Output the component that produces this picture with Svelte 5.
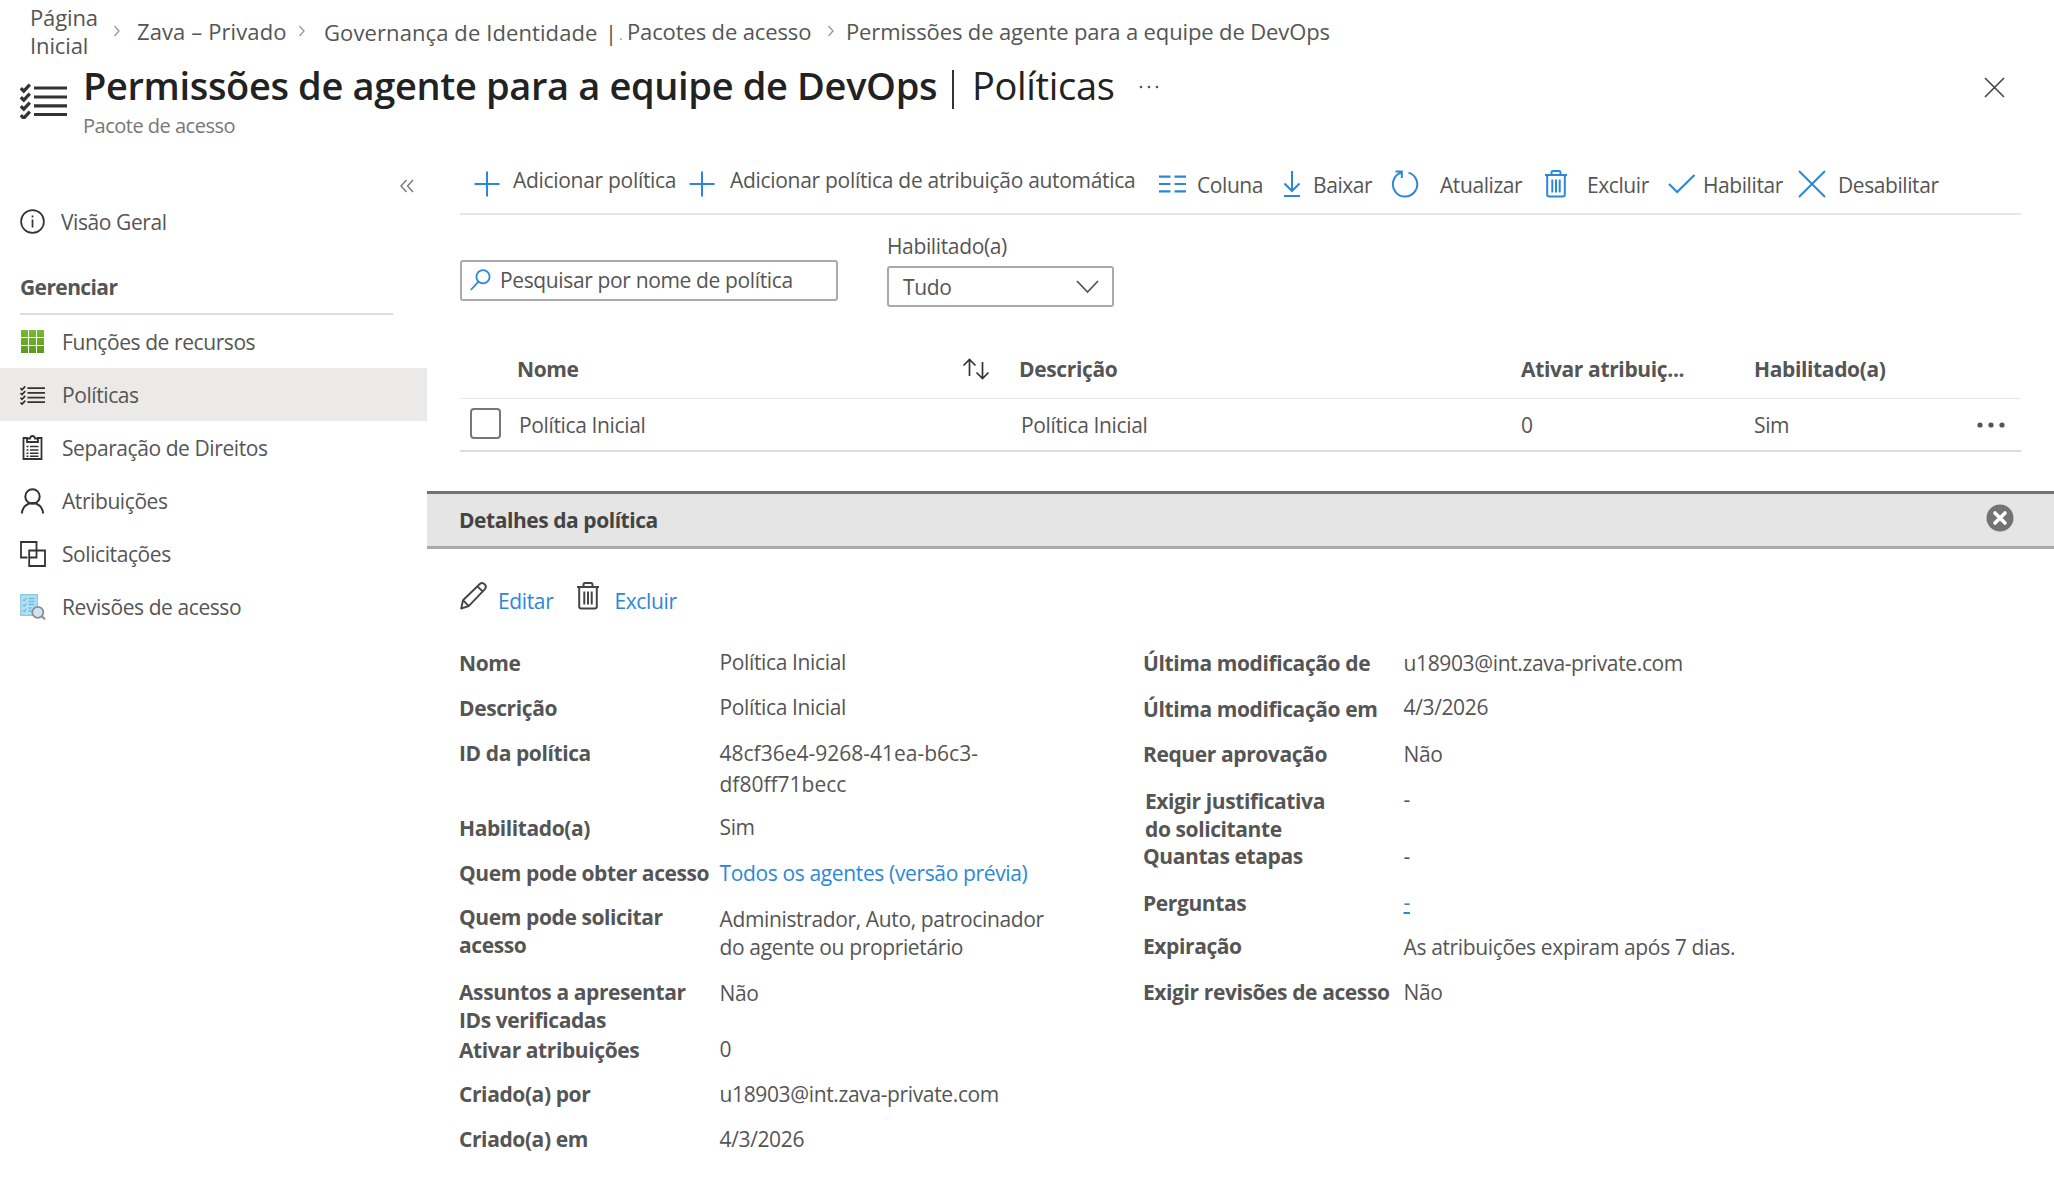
<script lang="ts">
	type Row = {
		label: string;
		value: string;
		height: number;
		shift?: number;
		link?: boolean;
		dash?: boolean;
		loose?: boolean;
		inset?: boolean;
	};

	const navItems = [
		{ icon: 'grid', title: 'Funções de recursos' },
		{ icon: 'checklist', title: 'Políticas', active: true },
		{ icon: 'clipboard', title: 'Separação de Direitos' },
		{ icon: 'person', title: 'Atribuições' },
		{ icon: 'squares', title: 'Solicitações' },
		{ icon: 'review', title: 'Revisões de acesso' }
	];

	const commands = [
		{ icon: 'plus', title: 'Adicionar política', raised: true },
		{ icon: 'plus', title: 'Adicionar política de atribuição automática', raised: true },
		{ icon: 'columns', title: 'Coluna' },
		{ icon: 'download', title: 'Baixar' },
		{ icon: 'refresh', title: 'Atualizar' },
		{ icon: 'trash', title: 'Excluir' },
		{ icon: 'check', title: 'Habilitar' },
		{ icon: 'cross', title: 'Desabilitar' }
	];

	const leftRows: Row[] = [
		{ label: 'Nome', value: 'Política Inicial', height: 45, shift: -1 },
		{ label: 'Descrição', value: 'Política Inicial', height: 45, shift: -1 },
		{ label: 'ID da política', value: '48cf36e4-9268-41ea-b6c3-\ndf80ff71becc', height: 75, shift: -1, loose: true },
		{ label: 'Habilitado(a)', value: 'Sim', height: 45, shift: -1 },
		{ label: 'Quem pode obter acesso', value: 'Todos os agentes (versão prévia)', height: 44, link: true },
		{
			label: 'Quem pode solicitar\nacesso',
			value: 'Administrador, Auto, patrocinador\ndo agente ou proprietário',
			height: 75,
			shift: 2
		},
		{ label: 'Assuntos a apresentar\nIDs verificadas', value: 'Não', height: 58, shift: 1 },
		{ label: 'Ativar atribuições', value: '0', height: 44, shift: -1 },
		{ label: 'Criado(a) por', value: 'u18903@int.zava-private.com', height: 45 },
		{ label: 'Criado(a) em', value: '4/3/2026', height: 45 }
	];

	const rightRows: Row[] = [
		{ label: 'Última modificação de', value: 'u18903@int.zava-private.com', height: 46 },
		{ label: 'Última modificação em', value: '4/3/2026', height: 45, shift: -2 },
		{ label: 'Requer aprovação', value: 'Não', height: 47 },
		{ label: 'Exigir justificativa\ndo solicitante', value: '-', height: 55, shift: -2, inset: true },
		{ label: 'Quantas etapas', value: '-', height: 47 },
		{ label: 'Perguntas', value: '-', height: 43, shift: -1, dash: true },
		{ label: 'Expiração', value: 'As atribuições expiram após 7 dias.', height: 46, shift: 1 },
		{ label: 'Exigir revisões de acesso', value: 'Não', height: 45 }
	];
</script>

{#snippet icon(name: string)}
	{#if name === 'plus'}
		<svg width="26" height="26" viewBox="0 0 26 26" fill="none" stroke="currentColor" stroke-width="2">
			<path d="M13 .5v25M.5 13h25" />
		</svg>
	{:else if name === 'columns'}
		<svg width="27" height="26" viewBox="0 0 27 26" fill="none" stroke="currentColor" stroke-width="2.2">
			<path d="M0 5.6h11.5M15.500 5.600H27M0 13h11.500M15.500 13H27M0 20.400h11.500M15.500 20.400H27" />
		</svg>
	{:else if name === 'download'}
		<svg width="18" height="28" viewBox="0 0 18 28" fill="none" stroke="currentColor" stroke-width="2">
			<path d="M9 1v19.500M1.500 13.500 9 21l7.500-7.500M1 26h16" />
		</svg>
	{:else if name === 'refresh'}
		<svg width="28" height="28" viewBox="0 0 28 28" fill="none" stroke="currentColor" stroke-width="2">
			<path d="M17.500 2.600A12.200 12.200 0 1 1 9 3.200L11 2M4.500 1.600h6.300v6.300" />
		</svg>
	{:else if name === 'trash'}
		<svg width="22" height="28" viewBox="0 0 22 28" fill="none" stroke="currentColor" stroke-width="2">
			<path d="M0 5h22M6.500 5V2.600Q6.500 1 8 1h6q1.500 0 1.500 1.600V5M2.200 5v19.500q0 2 2 2h13.600q2 0 2-2V5M7.300 9.500v13M11 9.500v13M14.700 9.500v13" />
		</svg>
	{:else if name === 'check'}
		<svg width="28" height="26" viewBox="0 0 28 26" fill="none" stroke="currentColor" stroke-width="2.200">
			<path d="m1 13 8.200 8L26.500 4" />
		</svg>
	{:else if name === 'cross'}
		<svg width="28" height="28" viewBox="0 0 28 28" fill="none" stroke="currentColor" stroke-width="2">
			<path d="m1 1 26 26M27 1 1 27" />
		</svg>
	{:else if name === 'checklist'}
		<svg width="25" height="20" viewBox="0 0 47 36" fill="none" stroke="#333" stroke-width="3.200">
			<path d="M14 5h33M14 14h33M14 22.800h33M14 31.500h33" />
			<path d="m.8 5.200 3 3 6-6.500M.8 14.200l3 3 6-6.500M.8 23.200l3 3 6-6.500M.8 32.200l3 3 6-6.500" />
		</svg>
	{:else if name === 'info'}
		<svg width="25" height="25" viewBox="0 0 25 25" fill="none" stroke="#333" stroke-width="1.700">
			<circle cx="12.500" cy="12.500" r="11.400" />
			<path d="M12.500 10.500v8M12.500 6.500v2" />
		</svg>
	{:else if name === 'grid'}
		<svg width="23" height="23" viewBox="0 0 23 23">
			<defs>
				<linearGradient id="green" x1="0" y1="0" x2="0" y2="23" gradientUnits="userSpaceOnUse">
					<stop offset="0" stop-color="#76bc2d" />
					<stop offset="1" stop-color="#5e9624" />
				</linearGradient>
			</defs>
			<path
				fill="url(#green)"
				d="M0 0h7v7H0zM8 0h7v7H8zM16 0h7v7h-7zM0 8h7v7H0zM8 8h7v7H8zM16 8h7v7h-7zM0 16h7v7H0zM8 16h7v7H8zM16 16h7v7h-7z"
			/>
		</svg>
	{:else if name === 'clipboard'}
		<svg width="21" height="25" viewBox="0 0 21 25" fill="none" stroke="#333" stroke-width="1.800">
			<path d="M6 3H1.500v21h18V3H15M5 7h11V3.500h-3Q12.500 1 10.500 1T8 3.500H5z" />
			<path d="M4.500 11.500h2M8 11.500h8.500M4.500 15h2M8 15h8.500M4.500 18.200h2M8 18.200h8.500M4.500 21.200h2M8 21.200h8.500" stroke-width="1.400" />
		</svg>
	{:else if name === 'person'}
		<svg width="23" height="26" viewBox="0 0 23 26" fill="none" stroke="#333" stroke-width="2">
			<circle cx="11.500" cy="8.500" r="7.200" />
			<path d="M1 25.500a10.500 10.500 0 0 1 21 0" />
		</svg>
	{:else if name === 'squares'}
		<svg width="26" height="26" viewBox="0 0 26 26" fill="none" stroke="#333" stroke-width="1.800">
			<path d="M7.500 16.500H1V1h15.500v15.500H9.200M9.200 9.500H25V25H9.200z" />
		</svg>
	{:else if name === 'review'}
		<svg width="26" height="26" viewBox="0 0 26 26" fill="none">
			<path d="M.8.800h16.500v20.500H.8z" fill="#b5e1f5" stroke="#8ccbe8" stroke-width="1.400" />
			<path d="M3 5.500l1.300 1.300 2-3M3 11l1.300 1.300 2-3M3 16.500l1.300 1.300 2-3M8.500 4.500h6M8.500 7.500h6M8.500 10.500h6M8.500 14h3M8.500 17h3" stroke="#6bbade" stroke-width="1.300" />
			<circle cx="17.800" cy="18.300" r="5.500" fill="#cfe6f1" stroke="#8a8f93" stroke-width="1.800" />
			<path d="m21.800 22.300 3.200 3" stroke="#8a8f93" stroke-width="2.200" />
		</svg>
	{:else if name === 'pencil'}
		<svg width="27" height="28" viewBox="0 0 27 28" fill="none" stroke="currentColor" stroke-width="1.900" stroke-linejoin="round">
			<path d="M1.200 26.500 3 18.200 19.800 2q2.400-2 4.800.3t.3 4.800L8.700 24.200zM17.500 4.300l5 5M3 18.200l5.700 6" />
		</svg>
	{:else if name === 'chevron'}
		<svg width="8" height="12" viewBox="0 0 8 12" fill="none" stroke="#999" stroke-width="1.300">
			<path d="m1.500 1 4.500 5-4.500 5" />
		</svg>
	{/if}
{/snippet}

{#snippet details(rows: Row[])}
	<dl class="details">
		{#each rows as row (row.label)}
			<div class="row" style:height="{row.height}px">
				<dt class:inset={row.inset}>{row.label}</dt>
				<dd class:loose={row.loose} style:margin-top="{row.shift ?? 0}px">
					{#if row.link}
						<a href="#/">{row.value}</a>
					{:else if row.dash}
						<a href="#/" class="dash">{row.value}</a>
					{:else}
						{row.value}
					{/if}
				</dd>
			</div>
		{/each}
	</dl>
{/snippet}

<div class="page">
	<header>
		<nav class="breadcrumb">
			<span class="home">Página Inicial</span>
			{@render icon('chevron')}
			<span class="wide">Zava – Privado</span>
			{@render icon('chevron')}
			<span class="wide low">Governança de Identidade</span>
			<span class="low">|</span>
			<span class="dot">.</span>
			<span>Pacotes de acesso</span>
			{@render icon('chevron')}
			<span>Permissões de agente para a equipe de DevOps</span>
		</nav>
		<div class="heading">
			<div class="heading-icon">{@render icon('checklist')}</div>
			<div>
				<h1><b>Permissões de agente para a equipe de DevOps</b><i></i><span>Políticas</span></h1>
				<p>Pacote de acesso</p>
			</div>
			<svg class="more" width="20" height="4" viewBox="0 0 20 4" fill="#555">
				<circle cx="2" cy="2" r="1.300" /><circle cx="10" cy="2" r="1.300" /><circle cx="18" cy="2" r="1.300" />
			</svg>
			<svg class="close" width="21" height="21" viewBox="0 0 21 21" fill="none" stroke="#444" stroke-width="1.600">
				<path d="m1 1 19 19M20 1 1 20" />
			</svg>
		</div>
	</header>

	<div class="body">
		<aside>
			<svg class="collapse" width="14" height="14" viewBox="0 0 14 14" fill="none" stroke="#777" stroke-width="1.400">
				<path d="M6.500 1 1 7l5.500 6M13 1 7.500 7l5.500 6" />
			</svg>
			<div class="nav-item overview">
				<span class="nav-icon">{@render icon('info')}</span>Visão Geral
			</div>
			<h2>Gerenciar</h2>
			{#each navItems as item (item.title)}
				<div class="nav-item" class:active={item.active}>
					<span class="nav-icon">{@render icon(item.icon)}</span>{item.title}
				</div>
			{/each}
		</aside>

		<main>
			<div class="toolbar">
				{#each commands as command (command.title)}
					<span class="command-icon">{@render icon(command.icon)}</span>
					<span class="command" class:raised={command.raised}>{command.title}</span>
				{/each}
			</div>

			<div class="filters">
				<div class="search">
					<svg width="21" height="22" viewBox="0 0 21 22" fill="none" stroke="#2b88d8" stroke-width="1.800">
						<circle cx="13" cy="7.800" r="6.600" />
						<path d="M8.500 12.600.8 21" />
					</svg>
					<span>Pesquisar por nome de política</span>
				</div>
				<div class="filter">
					<span>Habilitado(a)</span>
					<div class="select">
						Tudo
						<svg width="23" height="14" viewBox="0 0 23 14" fill="none" stroke="#555" stroke-width="1.800">
							<path d="m1 1 10.500 11L22 1" />
						</svg>
					</div>
				</div>
			</div>

			<div class="table">
				<div class="table-row table-head">
					<span></span>
					<span>Nome</span>
					<svg width="28" height="22" viewBox="0 0 28 22" fill="none" stroke="#333" stroke-width="1.700">
						<path d="M7.500 18V2M1.500 7.500l6-6 6 6M20.500 4v16M14.500 14.500l6 6 6-6" />
					</svg>
					<span>Descrição</span>
					<span>Ativar atribuiç...</span>
					<span>Habilitado(a)</span>
				</div>
				<div class="table-row">
					<span class="checkbox"></span>
					<span class="nudge">Política Inicial</span>
					<span></span>
					<span class="nudge">Política Inicial</span>
					<span>0</span>
					<span>Sim</span>
					<svg width="28" height="6" viewBox="0 0 28 6" fill="#555">
						<circle cx="3" cy="3" r="2.600" /><circle cx="14" cy="3" r="2.600" /><circle cx="25" cy="3" r="2.600" />
					</svg>
				</div>
			</div>

			<section>
				<div class="section-head">
					<h3>Detalhes da política</h3>
					<svg width="28" height="28" viewBox="0 0 28 28">
						<circle cx="14" cy="14" r="13.500" fill="#737373" />
						<path d="m9 9 10 10M19 9 9 19" stroke="#fff" stroke-width="3.600" stroke-linecap="round" />
					</svg>
				</div>
				<div class="actions">
					{@render icon('pencil')}
					<a href="#/">Editar</a>
					{@render icon('trash')}
					<a href="#/">Excluir</a>
				</div>
				<div class="columns">
					{@render details(leftRows)}
					{@render details(rightRows)}
				</div>
			</section>
		</main>
	</div>
</div>

<style>
	:global(body) {
		background: #fff;
	}

	.page {
		width: 2054px;
		height: 1184px;
		overflow: hidden;
		font-family: 'Open Sans', 'Noto Sans', sans-serif;
		font-size: 21px;
		letter-spacing: -0.36px;
		line-height: 28px;
		color: #555;
		white-space: nowrap;
	}

	svg {
		display: block;
		flex-shrink: 0;
	}

	h1,
	h2,
	h3,
	p,
	dl,
	dt,
	dd {
		margin: 0;
	}

	a {
		color: #2b88d8;
		text-decoration: none;
	}

	.breadcrumb {
		display: grid;
		grid-template-columns: 83px 24px 161px 26px 281px 14px 8px 200px 19px auto;
		align-items: center;
		justify-content: start;
		height: 58px;
		padding: 2px 0 0 30px;
		font-size: 22px;
		letter-spacing: -0.13px;
	}

	.home {
		width: 75px;
		white-space: normal;
	}

	.wide {
		letter-spacing: 0.1px;
	}

	.low {
		padding-top: 2px;
	}

	.dot {
		font-size: 14px;
		color: #999;
		padding-top: 8px;
	}

	.heading {
		display: flex;
		height: 91px;
	}

	.heading-icon {
		width: 63px;
		padding: 23px 0 0 20px;
	}

	.heading-icon :global(svg) {
		width: 47px;
		height: 36px;
	}

	h1 {
		display: flex;
		align-items: center;
		height: 51px;
		margin-bottom: 1px;
		font-size: 38px;
		font-weight: 400;
		letter-spacing: -0.35px;
		line-height: 51px;
		color: #222;
	}

	h1 b {
		font-weight: 600;
	}

	h1 i {
		width: 2px;
		height: 39px;
		margin: 8px 18px 0 15px;
		background: #333;
	}

	.heading p {
		font-size: 20px;
		letter-spacing: -0.5px;
		color: #777;
	}

	.more {
		margin: 25px 0 0 25px;
	}

	.close {
		margin: 17px 49px 0 auto;
	}

	.body {
		display: flex;
	}

	aside {
		width: 427px;
	}

	.collapse {
		margin: 28px 0 0 400px;
	}

	.nav-item {
		display: flex;
		align-items: center;
		height: 53px;
		letter-spacing: -0.42px;
	}

	.nav-icon {
		display: flex;
		justify-content: center;
		width: 25px;
		margin: 0 17px 0 20px;
	}

	.active {
		background: #ebeae9;
	}

	.overview {
		margin-top: 2px;
	}

	.overview .nav-icon {
		margin-right: 16px;
	}

	h2 {
		height: 40px;
		margin: 25px 34px 0 20px;
		border-bottom: 2px solid #ddd;
		font-size: 21px;
		font-weight: 700;
		letter-spacing: -0.6px;
		line-height: 28px;
	}

	main {
		width: 1627px;
	}

	.toolbar {
		display: grid;
		grid-template-columns: 39px 176px 41px 429px 38px 86px 30px 78px 49px 105px 42px 81px 35px 95px 40px auto;
		align-items: center;
		justify-content: start;
		height: 62px;
		margin: 0 33px;
		padding-left: 14px;
		border-bottom: 2px solid #e6e6e6;
	}

	.command-icon {
		color: #2b88d8;
		padding-top: 4px;
	}

	.command {
		padding-top: 6px;
		letter-spacing: -0.42px;
	}

	.raised {
		padding: 0 0 4px;
		letter-spacing: -0.3px;
	}

	.filters {
		display: flex;
		align-items: flex-end;
		gap: 49px;
		height: 92px;
		padding-left: 33px;
	}

	.search,
	.select {
		display: flex;
		align-items: center;
		box-sizing: border-box;
		height: 41px;
		border: 2px solid #aaa;
		border-radius: 3px;
	}

	.search {
		width: 378px;
		margin-bottom: 6px;
		padding: 0 0 2px 8px;
		gap: 9px;
	}

	.select {
		justify-content: space-between;
		width: 227px;
		margin-top: 6px;
		padding: 0 13px 0 14px;
	}

	.table {
		margin: 33px 33px 0;
	}

	.table-row {
		display: grid;
		grid-template-columns: 57px 445px 57px 502px 233px 223px auto;
		align-items: center;
		height: 51px;
		border-bottom: 2px solid #ddd;
	}

	.table-head {
		height: 58px;
		border-bottom: 1px solid #e8e8e8;
		font-weight: 700;
	}

	.nudge {
		padding-left: 2px;
	}

	.checkbox {
		box-sizing: border-box;
		width: 31px;
		height: 31px;
		margin: 0 0 2px 10px;
		border: 2px solid #777;
		border-radius: 4px;
	}

	.section-head {
		display: flex;
		align-items: center;
		justify-content: space-between;
		box-sizing: border-box;
		height: 58px;
		margin-top: 39px;
		padding: 0 40px 0 32px;
		border-top: 3px solid #737373;
		border-bottom: 3px solid #aaa;
		background: #e5e5e5;
	}

	.section-head svg {
		margin-bottom: 4px;
	}

	h3 {
		font-size: 21px;
		letter-spacing: -0.45px;
		color: #444;
	}

	.actions {
		display: flex;
		align-items: center;
		height: 28px;
		margin-top: 33px;
		padding-left: 33px;
		color: #444;
	}

	.actions a {
		margin: 10px 24px 0 11px;
	}

	.actions a:last-child {
		margin-left: 15px;
	}

	.columns {
		display: flex;
		padding: 39px 0 0 32px;
	}

	.details {
		width: 684px;
	}

	.row {
		display: flex;
	}

	dt {
		flex-shrink: 0;
		width: 260.5px;
		font-weight: 700;
		letter-spacing: -0.4px;
		white-space: pre;
	}

	dd {
		white-space: pre-line;
	}

	.inset {
		padding-left: 2px;
		width: 258.5px;
	}

	.loose {
		line-height: 31px;
		letter-spacing: 0;
	}

	.dash {
		text-decoration: underline;
	}
</style>
